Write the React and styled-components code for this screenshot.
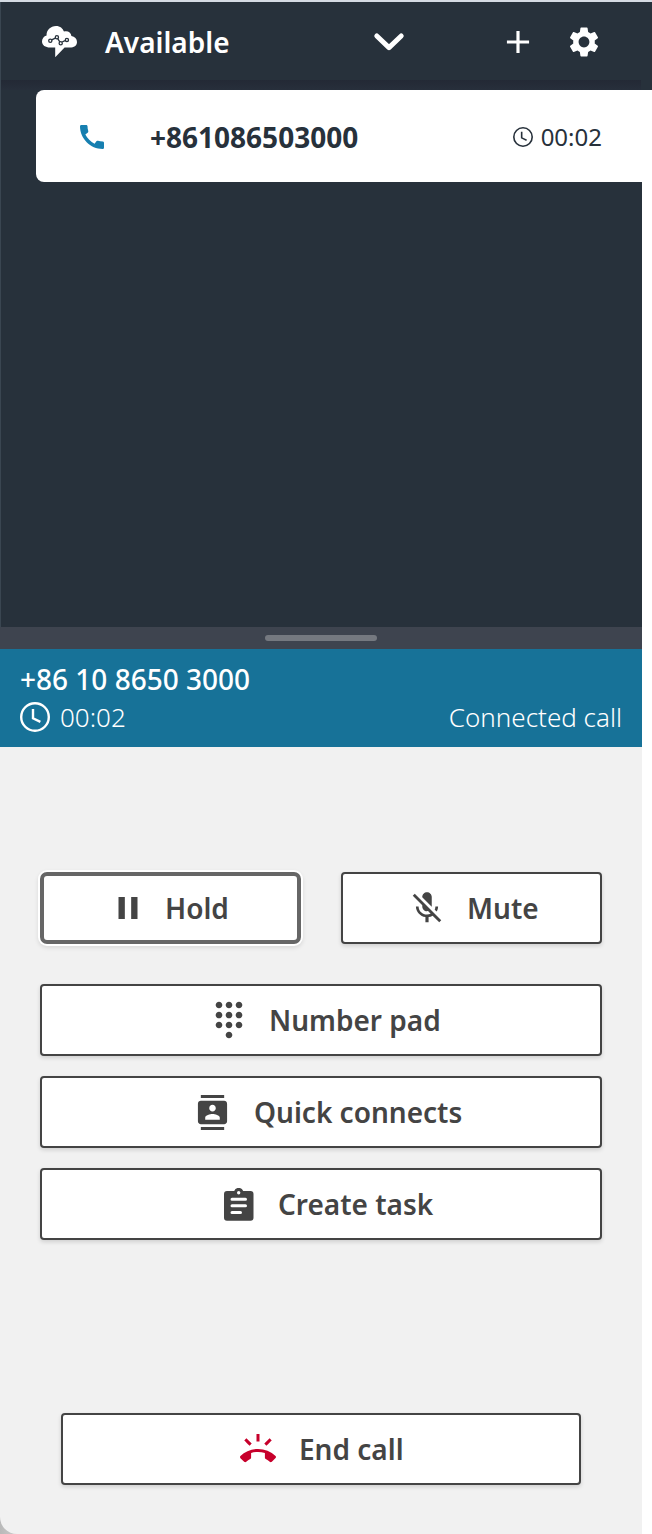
import React from "react";
import styled, { createGlobalStyle } from "styled-components";
import {
  MdAdd, MdSettings, MdCall, MdPause, MdMicOff, MdDialpad, MdContacts, MdRingVolume,
} from "react-icons/md";

const GlobalStyle = createGlobalStyle`
  * { box-sizing: border-box; }
  body {
    margin: 0;
    background: #fff;
    font-family: "Noto Sans", "Open Sans", sans-serif;
  }
  svg { display: block; flex: none; }
`;

const Page = styled.main`
  width: 652px;
  height: 1534px;
  overflow: hidden;
  display: flex;
  flex-direction: column;
  border-top: 2px solid #d5dbe3;
`;

const Header = styled.header`
  height: 78px;
  flex: none;
  display: flex;
  align-items: center;
  padding: 2px 50px 0 42px;
  background: #27313b;
  color: #fff;
  border-left: 1px solid #3a4651;
  padding-left: 41px;
`;

const Label = styled.span`
  font-size: ${(p) => p.$size || 28}px;
  font-weight: ${(p) => p.$weight || 600};
  letter-spacing: ${(p) => p.$track || 0}px;
  line-height: 38px;
  white-space: nowrap;
`;

const StatusPicker = styled.div`
  width: 300px;
  margin-left: 28px;
  display: flex;
  align-items: center;
  justify-content: space-between;
`;

const HeaderActions = styled.div`
  margin-left: auto;
  display: flex;
  align-items: center;
  gap: 29px;
`;

const ContactList = styled.section`
  height: 547px;
  flex: none;
  padding: 10px 0 0 35px;
  border-left: 1px solid #3a4651;
  background:
    linear-gradient(#232935, #272f3b) 0 0 / 640px 10px no-repeat,
    linear-gradient(#27313b, #27313b) 0 0 / 100% 20px no-repeat,
    linear-gradient(#27313b, #27313b) 0 0 / 641px 100% no-repeat;
`;

const ContactCard = styled.article`
  height: 92px;
  display: flex;
  align-items: center;
  padding: 2px 50px 0 40px;
  border-radius: 8px 0 0 8px;
  background: #fff;
  color: #27313b;
`;

const ContactNumber = styled.div`
  flex: 1;
  margin-left: 42px;
`;

const Timer = styled.div`
  display: flex;
  align-items: center;
  gap: ${(p) => p.$gap}px;
`;

const ResizeBar = styled.div`
  width: 642px;
  height: 22px;
  flex: none;
  display: flex;
  align-items: center;
  justify-content: center;
  background: #3e444f;
`;

const Grip = styled.div`
  width: 112px;
  height: 6px;
  border-radius: 3px;
  background: #757980;
`;

const CallBanner = styled.section`
  width: 642px;
  height: 98px;
  flex: none;
  padding: 11px 20px 0;
  background: #177298;
  color: #fff;
`;

const BannerRow = styled.div`
  height: 38px;
  display: flex;
  align-items: center;
  justify-content: space-between;
`;

const PanelEdge = styled.div`
  width: 642px;
  flex: 1;
  background: linear-gradient(90deg, #b9b9b9, #cdcdcd 20px);
`;

const Controls = styled.section`
  height: 100%;
  padding: 125px 40px 0;
  border-bottom-left-radius: 17px;
  background: #f1f1f1;
`;

const ButtonPair = styled.div`
  display: grid;
  grid-template-columns: 261px 261px;
  gap: 40px;
  margin-bottom: 40px;
`;

const ButtonStack = styled.div`
  display: grid;
  gap: 20px;
`;

const EndRow = styled.div`
  margin: 173px 21px 0;
`;

const ActionButton = styled.button`
  width: 100%;
  height: 72px;
  display: flex;
  align-items: center;
  gap: ${(p) => p.$gap}px;
  padding: 0 0 0 ${(p) => p.$inset}px;
  border: ${(p) => (p.$focused ? "4px solid #666" : "2px solid #444")};
  border-radius: ${(p) => (p.$focused ? 7 : 4)}px;
  background: #fff;
  color: #444;
  font-family: inherit;
  box-shadow: ${(p) => (p.$focused ? "0 0 0 2px #fff, 0 2px 4px 2px rgba(0,0,0,.1)" : "0 2px 4px rgba(0,0,0,.14)")};
`;

const Logo = () => (
  <svg width="35" height="32" viewBox="0 0 35 32">
    <path fill="#fff" d="M8 21.6C3.5 21.6 0 19.300 0 15.600C0 12.600 1.800 10.300 4.600 9.600C4.200 4.300 8.600 0 14 0C18.300 0 20.600 2.300 22 5.600C25.500 4.300 29 6.400 29.400 10C32.700 10.800 35 12.800 35 15.900C35 19.600 31.800 21.600 28 21.600H22.600L13.200 31.300V21.600Z" />
    <g fill="none" stroke="#27313b" strokeWidth="1.300">
      <path d="M9.700 13.900L13.300 12.100M15.700 12.700L17.800 15.800M20.200 16L23 14.600" />
      <circle cx="8.300" cy="14.800" r="1.600" />
      <circle cx="14.900" cy="11.200" r="1.600" />
      <circle cx="18.700" cy="17.300" r="1.600" />
      <circle cx="24.900" cy="13.900" r="1.600" />
    </g>
  </svg>
);

const Chevron = () => (
  <svg width="32" height="20" viewBox="0 0 32 20" fill="none" stroke="#fff" strokeWidth="5" strokeLinecap="round" strokeLinejoin="round">
    <path d="M3.800 4L16 15.600L28.200 4" />
  </svg>
);

const Clock = ({ size, stroke }) => (
  <svg width={size} height={size} viewBox="0 0 30 30" fill="none" stroke="currentColor" strokeWidth={stroke}>
    <circle cx="15" cy="15" r={15 - stroke / 2} />
    <path d="M13 7V16.300L20.400 19.800" />
  </svg>
);

const TaskIcon = () => (
  <svg width="30" height="33" viewBox="0 0 30 33">
    <path fill="currentColor" fillRule="evenodd" d="M3 3H10.200A4.800 4.800 0 0 1 19.200 3H26.500Q29.500 3 29.500 6V29.800Q29.500 32.800 26.500 32.800H3Q0 32.800 0 29.800V6Q0 3 3 3ZM14.700 3A1.700 1.700 0 1 0 14.700 6.400A1.700 1.700 0 1 0 14.700 3Z" />
    <path stroke="#fff" strokeWidth="3" strokeLinecap="round" d="M8 11.300H21.500M8 17.800H21.500M8 24.500H16.500" />
  </svg>
);

const ContactIcon = () => <MdContacts size={35} />;

export default function App() {
  return (
    <>
      <GlobalStyle />
      <Page>
        <Header>
          <Logo />
          <StatusPicker>
            <Label>Available</Label>
            <Chevron />
          </StatusPicker>
          <HeaderActions>
            <MdAdd size={38} />
            <MdSettings size={36} />
          </HeaderActions>
        </Header>
        <ContactList>
          <ContactCard>
            <MdCall size={32} color="#167fb0" />
            <ContactNumber>
              <Label $weight={700}>+861086503000</Label>
            </ContactNumber>
            <Timer $gap={8}>
              <Clock size={20} stroke={2.4} />
              <Label $size={24} $weight={400}>00:02</Label>
            </Timer>
          </ContactCard>
        </ContactList>
        <ResizeBar><Grip /></ResizeBar>
        <CallBanner>
          <BannerRow><Label $weight={500}>+86 10 8650 3000</Label></BannerRow>
          <BannerRow>
            <Timer $gap={10}>
              <Clock size={30} stroke={2.4} />
              <Label $size={26} $weight={300}>00:02</Label>
            </Timer>
            <Label $size={26} $weight={300}>Connected call</Label>
          </BannerRow>
        </CallBanner>
        <PanelEdge>
          <Controls>
            <ButtonPair>
              <ActionButton $focused $inset={65} $gap={18}>
                <MdPause size={38} />
                <Label>Hold</Label>
              </ActionButton>
              <ActionButton $inset={65} $gap={21}>
                <MdMicOff size={38} />
                <Label>Mute</Label>
              </ActionButton>
            </ButtonPair>
            <ButtonStack>
              <ActionButton $inset={167} $gap={20}>
                <MdDialpad size={40} />
                <Label>Number pad</Label>
              </ActionButton>
              <ActionButton $inset={153} $gap={24}>
                <ContactIcon />
                <Label>Quick connects</Label>
              </ActionButton>
              <ActionButton $inset={182} $gap={24}>
                <TaskIcon />
                <Label>Create task</Label>
              </ActionButton>
            </ButtonStack>
            <EndRow>
              <ActionButton $inset={177} $gap={23}>
                <MdRingVolume size={36} color="#c7002b" />
                <Label>End call</Label>
              </ActionButton>
            </EndRow>
          </Controls>
        </PanelEdge>
      </Page>
    </>
  );
}
